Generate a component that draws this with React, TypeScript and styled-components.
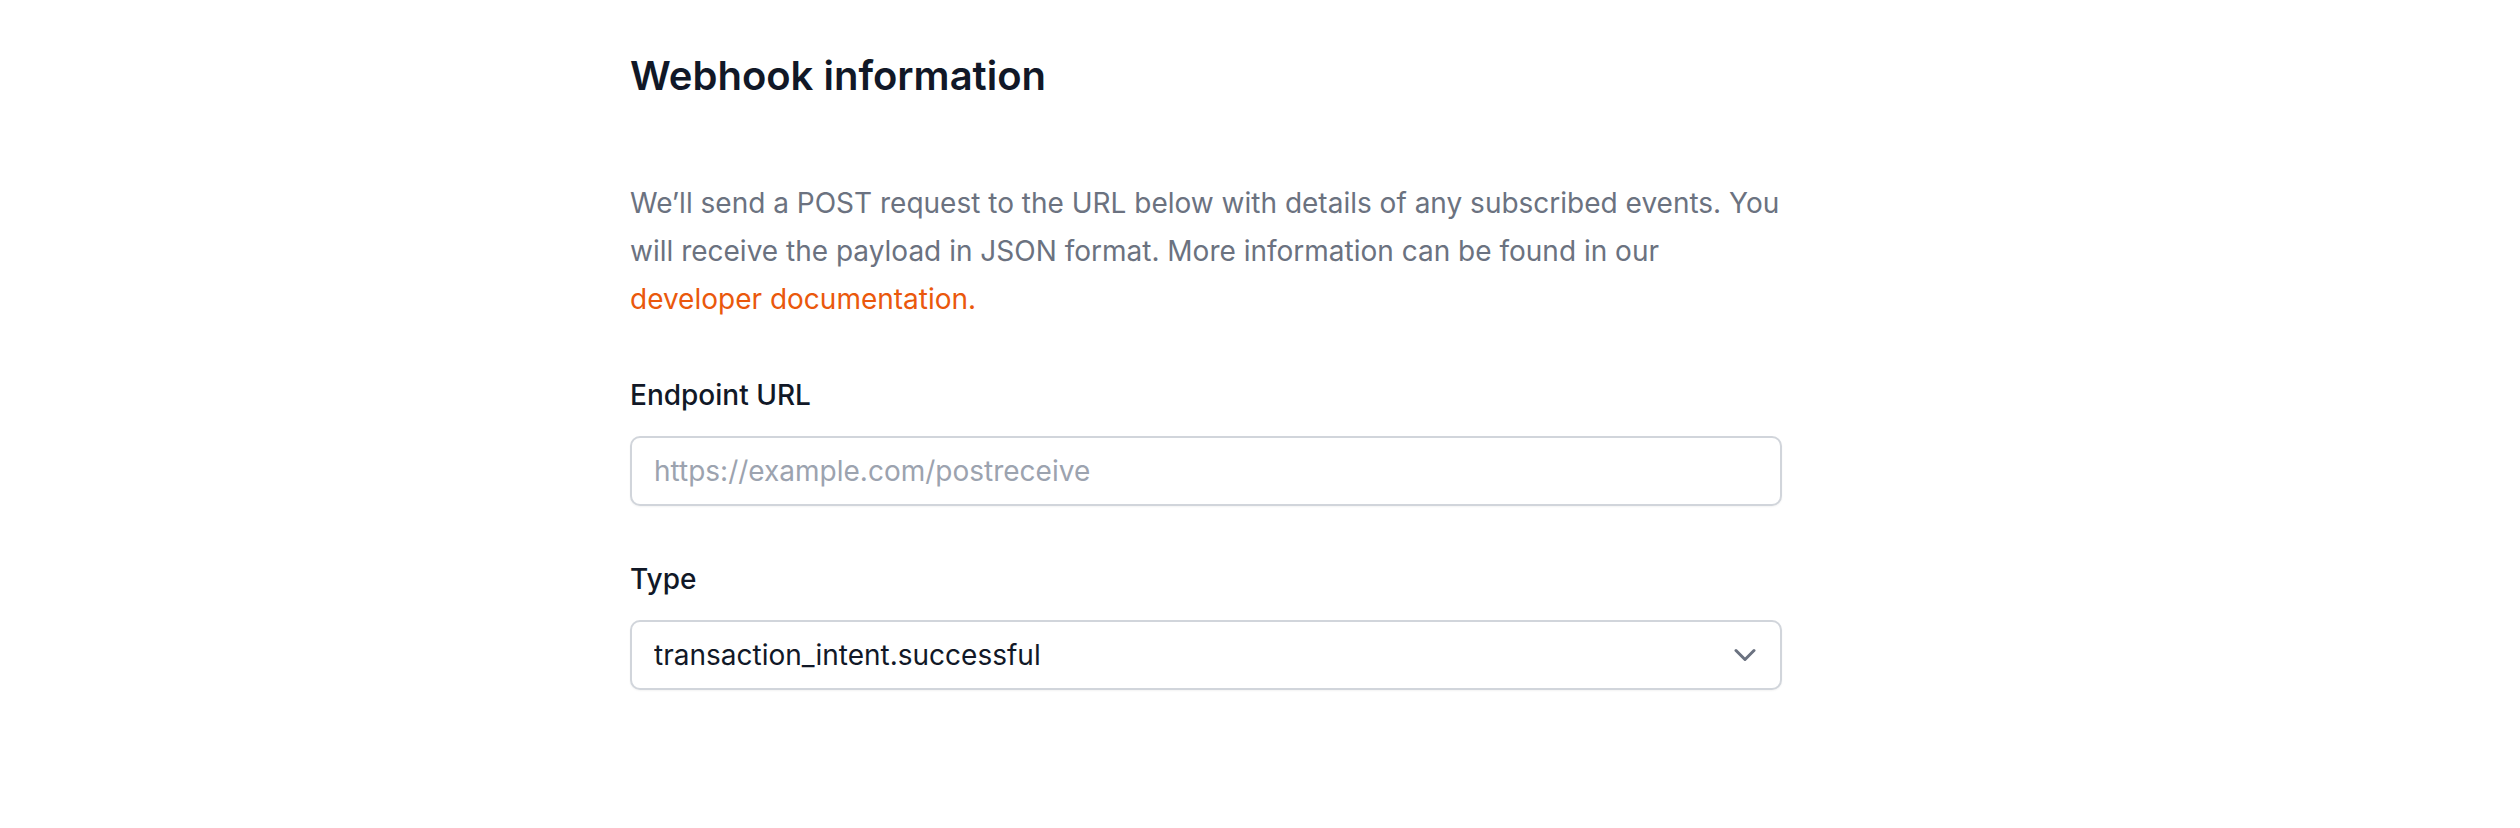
import styled, { createGlobalStyle } from 'styled-components';

const GlobalStyle = createGlobalStyle`
  html, body {
    margin: 0;
    padding: 0;
    background: #ffffff;
  }
  body {
    font-family: Inter, "Noto Sans", "Liberation Sans", sans-serif;
    -webkit-font-smoothing: antialiased;
  }
`

const Page = styled.main`
  width: 2520px;
  height: 828px;
  box-sizing: border-box;
  padding: 50px 0 0 630px;
`

const Section = styled.section`
  width: 1152px;
  display: flex;
  flex-direction: column;
`

const Title = styled.h2`
  margin: 0;
  font-size: 40px;
  line-height: 52px;
  font-weight: 600;
  color: #111827;
`

const Description = styled.p`
  margin: 77px 0 0;
  font-size: 28px;
  line-height: 48px;
  color: #6b7280;
`

const DocLink = styled.a`
  color: #ea580c;
  text-decoration: none;
`

const Field = styled.div<{ $gap: number }>`
  display: flex;
  flex-direction: column;
  gap: 21px;
  margin-top: ${p => p.$gap}px;
`

const Label = styled.label`
  font-size: 28px;
  line-height: 40px;
  font-weight: 500;
  color: #111827;
`

const TextInput = styled.input`
  box-sizing: border-box;
  width: 100%;
  height: 70px;
  padding: 0 22px;
  border: 2px solid #d1d5db;
  border-radius: 10px;
  font-family: inherit;
  font-size: 28px;
  color: #111827;
  background: #fff;
  box-shadow: 0 1px 2px rgba(0, 0, 0, 0.05);
  outline: none;

  &::placeholder {
    color: #9ca3af;
  }
`

const SelectWrap = styled.div`
  position: relative;
  width: 100%;
`

const Select = styled.select`
  box-sizing: border-box;
  width: 100%;
  height: 70px;
  padding: 0 64px 0 22px;
  border: 2px solid #d1d5db;
  border-radius: 10px;
  font-family: inherit;
  font-size: 28px;
  color: #111827;
  background: #fff;
  appearance: none;
  outline: none;
  box-shadow: 0 1px 2px rgba(0, 0, 0, 0.05);
`

const Chevron = styled.svg`
  position: absolute;
  right: 26px;
  top: 50%;
  transform: translateY(-50%);
  pointer-events: none;
`

export default function App() {
  return (
    <>
      <GlobalStyle />
      <Page>
        <Section>
          <Title>Webhook information</Title>
          <Description>
            We’ll send a POST request to the URL below with details of any subscribed events. You will receive the
            payload in JSON format. More information can be found in our{' '}
            <DocLink href="#">developer documentation.</DocLink>
          </Description>

          <Field $gap={52}>
            <Label htmlFor="endpoint">Endpoint URL</Label>
            <TextInput id="endpoint" type="text" placeholder="https://example.com/postreceive" />
          </Field>

          <Field $gap={53}>
            <Label htmlFor="type">Type</Label>
            <SelectWrap>
              <Select id="type" defaultValue="transaction_intent.successful">
                <option value="transaction_intent.successful">transaction_intent.successful</option>
                <option value="transaction_intent.failed">transaction_intent.failed</option>
              </Select>
              <Chevron width="22" height="13" viewBox="0 0 22 13" fill="none">
                <path d="M2 2l9 9 9-9" stroke="#6b7280" strokeWidth="3" strokeLinecap="round" strokeLinejoin="round" />
              </Chevron>
            </SelectWrap>
          </Field>
        </Section>
      </Page>
    </>
  )
}
